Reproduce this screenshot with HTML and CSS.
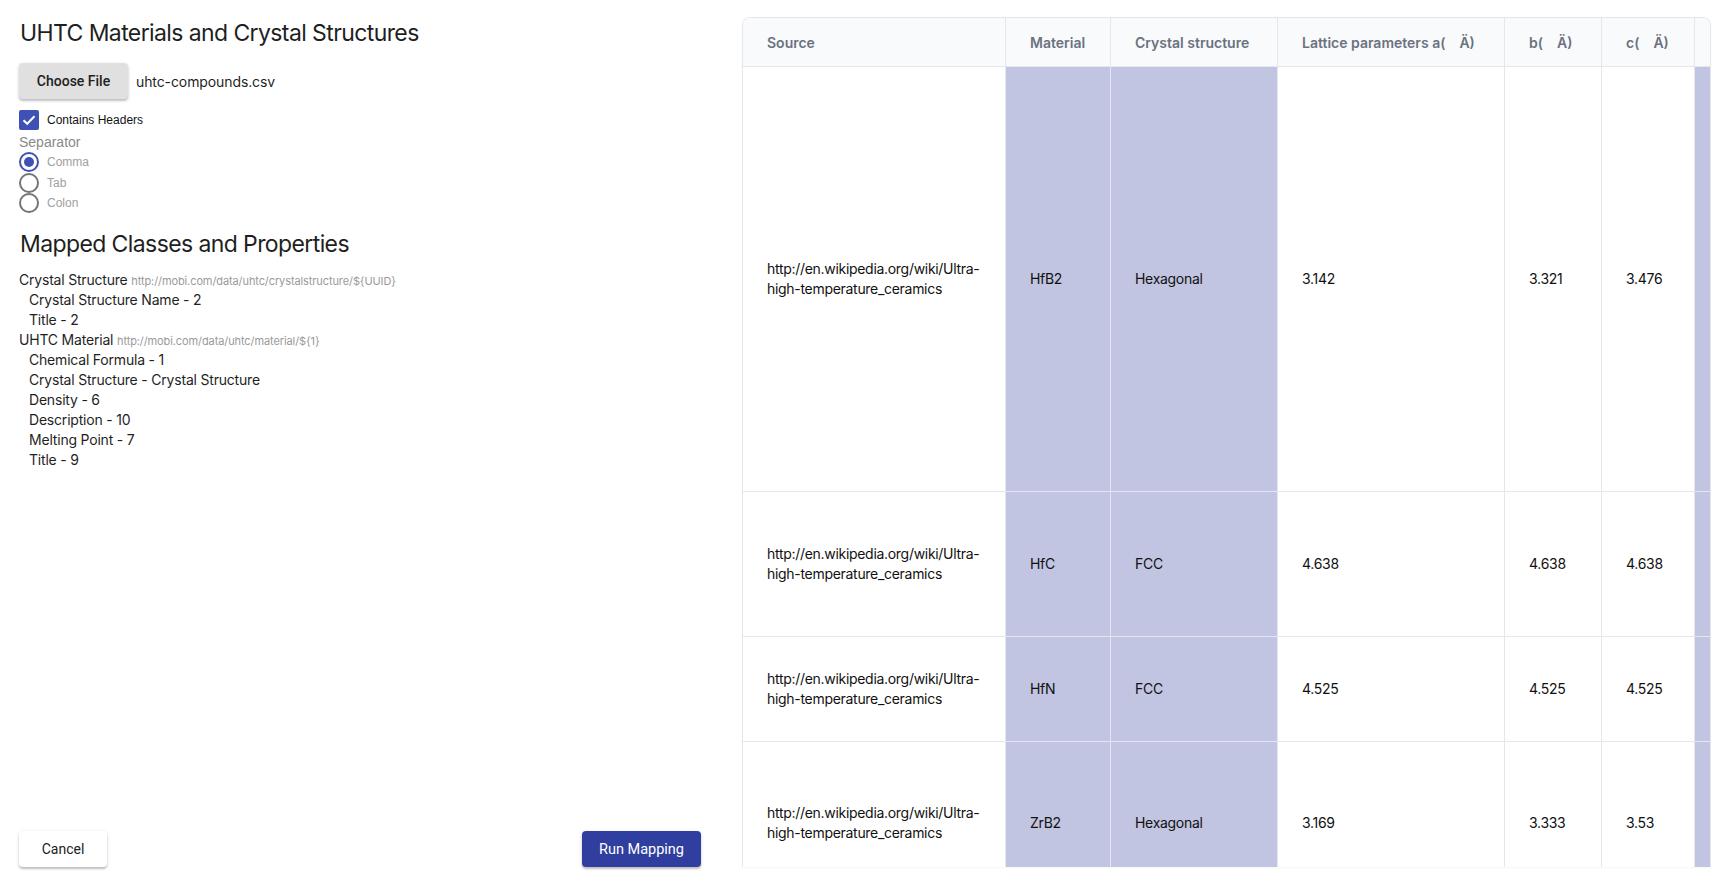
FILE: index.html
```html
<!DOCTYPE html>
<html lang="en">
<head>
<meta charset="utf-8">
<title>UHTC Materials and Crystal Structures</title>
<link rel="stylesheet" href="styles.css">
</head>
<body>
<div class="page">
  <section class="left">
    <h1 class="title">UHTC Materials and Crystal Structures</h1>
    <div class="file-row">
      <button class="btn btn-grey">Choose File</button>
      <span class="file-name">uhtc-compounds.csv</span>
    </div>
    <label class="check-row">
      <span class="checkbox">
        <svg viewBox="0 0 20 20" width="20" height="20"><path d="M4.5 10.2 L8.2 13.8 L15.5 6.3" fill="none" stroke="#fff" stroke-width="2"/></svg>
      </span>
      <span class="check-label">Contains Headers</span>
    </label>
    <div class="sep-label">Separator</div>
    <div class="radio-group">
      <div class="radio-row"><span class="radio on"></span><span class="radio-label">Comma</span></div>
      <div class="radio-row"><span class="radio"></span><span class="radio-label">Tab</span></div>
      <div class="radio-row"><span class="radio"></span><span class="radio-label">Colon</span></div>
    </div>
    <h2 class="title title-2">Mapped Classes and Properties</h2>
    <ul class="mapping">
      <li class="cls">Crystal Structure <span class="iri">http://mobi.com/data/uhtc/crystalstructure/${UUID}</span></li>
      <li class="prop">Crystal Structure Name - 2</li>
      <li class="prop">Title - 2</li>
      <li class="cls">UHTC Material <span class="iri">http://mobi.com/data/uhtc/material/${1}</span></li>
      <li class="prop">Chemical Formula - 1</li>
      <li class="prop">Crystal Structure - Crystal Structure</li>
      <li class="prop">Density - 6</li>
      <li class="prop">Description - 10</li>
      <li class="prop">Melting Point - 7</li>
      <li class="prop">Title - 9</li>
    </ul>
    <div class="actions">
      <button class="btn btn-white">Cancel</button>
      <button class="btn btn-primary">Run Mapping</button>
    </div>
  </section>
  <section class="right">
    <div class="card">
      <table class="grid">
        <thead>
          <tr>
            <th class="c-src">Source</th>
            <th class="c-mat">Material</th>
            <th class="c-cry">Crystal structure</th>
            <th class="c-lat">Lattice parameters a(<span class="gap"></span>Ä)</th>
            <th class="c-b">b(<span class="gap"></span>Ä)</th>
            <th class="c-c">c(<span class="gap"></span>Ä)</th>
            <th class="c-x"></th>
          </tr>
        </thead>
        <tbody>
          <tr class="r1">
            <td>http://en.wikipedia.org/wiki/Ultra-high-temperature_ceramics</td>
            <td class="hl">HfB2</td>
            <td class="hl">Hexagonal</td>
            <td>3.142</td>
            <td>3.321</td>
            <td>3.476</td>
            <td class="hl"></td>
          </tr>
          <tr class="r2">
            <td>http://en.wikipedia.org/wiki/Ultra-high-temperature_ceramics</td>
            <td class="hl">HfC</td>
            <td class="hl">FCC</td>
            <td>4.638</td>
            <td>4.638</td>
            <td>4.638</td>
            <td class="hl"></td>
          </tr>
          <tr class="r3">
            <td>http://en.wikipedia.org/wiki/Ultra-high-temperature_ceramics</td>
            <td class="hl">HfN</td>
            <td class="hl">FCC</td>
            <td>4.525</td>
            <td>4.525</td>
            <td>4.525</td>
            <td class="hl"></td>
          </tr>
          <tr class="r4">
            <td>http://en.wikipedia.org/wiki/Ultra-high-temperature_ceramics</td>
            <td class="hl">ZrB2</td>
            <td class="hl">Hexagonal</td>
            <td>3.169</td>
            <td>3.333</td>
            <td>3.53</td>
            <td class="hl"></td>
          </tr>
        </tbody>
      </table>
    </div>
  </section>
</div>
</body>
</html>
```
FILE: styles.css
```css
* { box-sizing: border-box; }
html, body { margin: 0; padding: 0; background: #fff; }
body {
  width: 1731px;
  height: 883px;
  overflow: hidden;
  font-family: Inter, "Noto Sans", sans-serif;
  color: #1f1f1f;
}
.page {
  display: flex;
  gap: 41px;
  height: 883px;
  padding: 0 20px 16px 19px;
}
.left {
  width: 682px;
  display: flex;
  flex-direction: column;
  padding-top: 19px;
}
.title {
  margin: 0;
  font-size: 23px;
  letter-spacing: -0.6px;
  line-height: 28px;
  font-weight: 400;
  color: #1f1f1f;
  padding-left: 1px;
}
.file-row {
  display: flex;
  align-items: center;
  gap: 8px;
  margin-top: 16px;
}
.btn {
  font-family: Roboto, "Liberation Sans", sans-serif;
  font-size: 14px;
  height: 36px;
  border: none;
  border-radius: 4px;
  padding: 0 16px;
  cursor: pointer;
}
.btn-grey {
  width: 109px;
  background: #e0e0e0;
  color: #212121;
  font-weight: 500;
  box-shadow: 0 2px 2px rgba(0,0,0,0.18), 0 1px 4px rgba(0,0,0,0.12);
}
.file-name {
  font-size: 14px;
  letter-spacing: -0.1px;
  color: #1f1f1f;
}
.check-row {
  display: flex;
  align-items: center;
  gap: 8px;
  margin-top: 11px;
  height: 20px;
}
.checkbox {
  width: 20px;
  height: 20px;
  background: #3f51b5;
  border-radius: 2px;
  display: block;
}
.checkbox svg { display: block; }
.check-label {
  font-family: "Liberation Sans", Arial, sans-serif;
  font-size: 12px;
  color: #111;
}
.sep-label {
  font-family: "Liberation Sans", Arial, sans-serif;
  font-size: 14px;
  line-height: 20px;
  color: #8a8a8a;
  margin-top: 2px;
}
.radio-group { display: flex; flex-direction: column; }
.radio-row {
  display: flex;
  align-items: center;
  gap: 8px;
  height: 20.5px;
}
.radio {
  width: 20px;
  height: 20px;
  border-radius: 50%;
  border: 2px solid #757575;
  display: flex;
  align-items: center;
  justify-content: center;
}
.radio.on { border-color: #3f51b5; }
.radio.on::after {
  content: "";
  width: 10px;
  height: 10px;
  border-radius: 50%;
  background: #3f51b5;
}
.radio-label {
  font-family: "Liberation Sans", Arial, sans-serif;
  font-size: 12px;
  color: #a0a0a0;
}
.title-2 { margin-top: 16px; }
.mapping {
  list-style: none;
  margin: 12px 0 0;
  padding: 0;
  font-size: 14px;
  letter-spacing: -0.2px;
  line-height: 20px;
  color: #1f1f1f;
}
.mapping li { height: 20px; }
.mapping .prop { padding-left: 10px; }
.iri {
  font-size: 11px;
  line-height: 1;
  letter-spacing: -0.1px;
  color: #9a9a9a;
}
.actions {
  margin-top: auto;
  display: flex;
  justify-content: space-between;
}
.btn-white {
  width: 88px;
  background: #fff;
  color: #212121;
  box-shadow: 0 2px 2px rgba(0,0,0,0.2), 0 1px 4px rgba(0,0,0,0.1);
}
.btn-primary {
  width: 119px;
  background: #303f9f;
  color: #fff;
  font-size: 14.5px;
  box-shadow: 0 2px 2px rgba(0,0,0,0.2), 0 1px 4px rgba(0,0,0,0.1);
}
.right {
  width: 969px;
  padding-top: 17px;
}
.card {
  height: 850px;
  border: 1px solid #e5e7eb;
  border-bottom: none;
  border-radius: 8px 8px 0 0;
  overflow: hidden;
  box-shadow: 0 1px 2px rgba(0,0,0,0.04);
}
.grid {
  table-layout: fixed;
  border-collapse: separate;
  border-spacing: 0;
  width: 1072px;
  font-size: 14px;
  color: #111;
}
.grid th, .grid td {
  padding: 0 24px;
  border-right: 1px solid #e5e7eb;
  border-bottom: 1px solid #e5e7eb;
  text-align: left;
  vertical-align: middle;
}
.grid th {
  background: #f9fafb;
  color: #6b7280;
  font-weight: 600;
  height: 49px;
  white-space: nowrap;
}
.grid td { line-height: 20px; letter-spacing: -0.3px; }
.grid td.hl { background: #c2c5e2; border-right-color: #e4e5f1; border-bottom-color: #e4e5f1; }
.c-src { width: 263px; }
.c-mat { width: 105px; }
.c-cry { width: 167px; }
.c-lat { width: 227px; }
.c-b { width: 97px; }
.c-c { width: 93px; }
.c-x { width: 120px; }
.gap { display: inline-block; width: 14px; }
.r1 td { height: 425px; }
.r2 td { height: 145px; }
.r3 td { height: 105px; }
.r4 td { height: 163px; }
```
